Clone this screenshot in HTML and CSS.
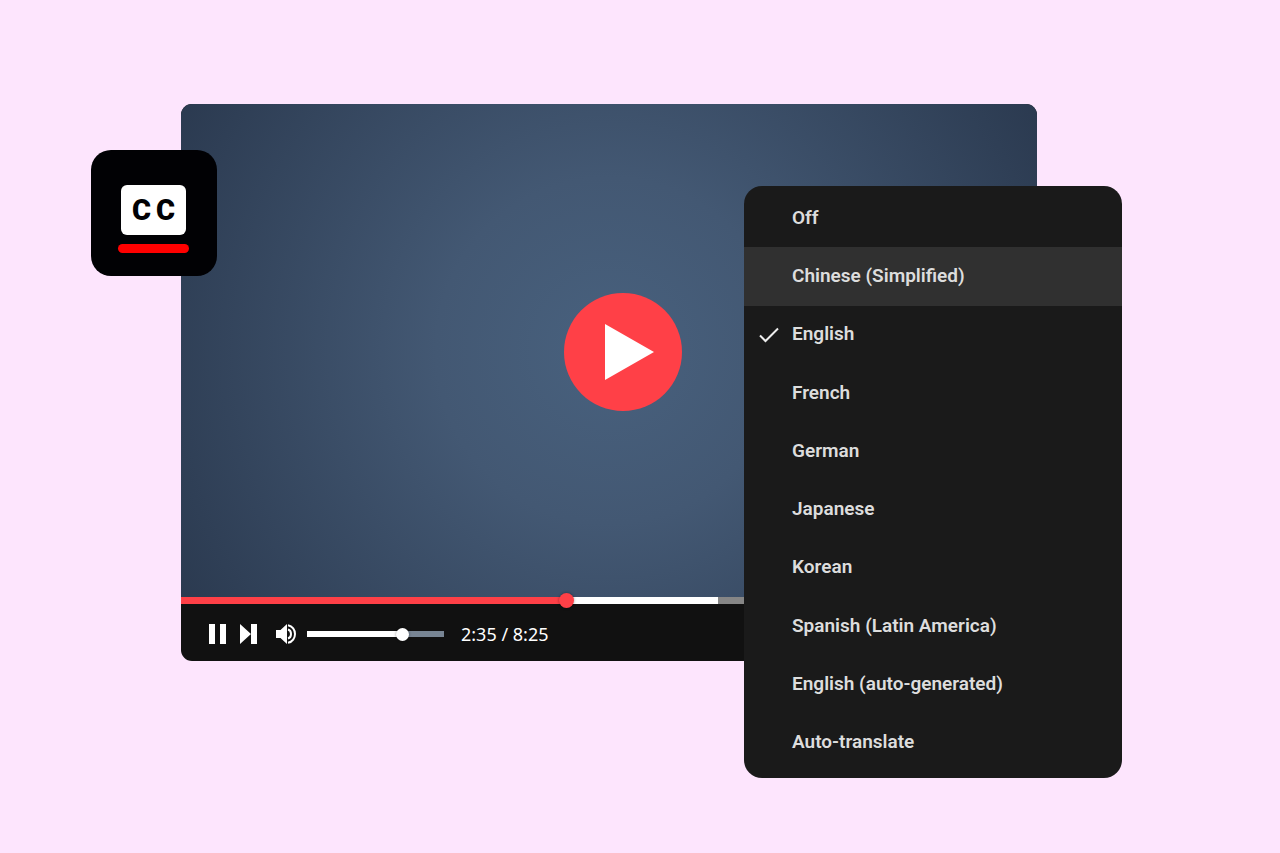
FILE: index.html
```html
<!DOCTYPE html>
<html lang="en">
<head>
    <meta charset="UTF-8">
    <title>Video Player Captions</title>
    <link rel="stylesheet" href="styles.css">
</head>
<body>

    <main class="player">
        <div class="video">
            <button type="button" class="play" aria-label="Play">
                <svg width="118" height="118" viewBox="0 0 118 118">
                    <path d="M41 31 L90 59 L41 87 Z" fill="white"/>
                </svg>
            </button>
        </div>

        <input type="range" class="progress" min="0" max="1000" value="449" aria-label="Seek">

        <div class="controls">
            <button type="button" class="pause" aria-label="Pause">
                <svg width="17" height="20" viewBox="0 0 17 20">
                    <path d="M0 0h6v20H0zM11 0h6v20h-6z" fill="white"/>
                </svg>
            </button>
            <button type="button" class="next" aria-label="Next">
                <svg width="17" height="20" viewBox="0 0 17 20">
                    <path d="M0 0L11 10L0 20zM11 0h6v20h-6z" fill="white"/>
                </svg>
            </button>
            <button type="button" class="mute" aria-label="Mute">
                <svg width="20" height="20" viewBox="0 0 20 20">
                    <path d="M0 6h4.500L11 0v20L4.500 14H0z" fill="white"/>
                    <path d="M12 1.200C16.500 2 19 6 19 10C19 14 16.500 18 12 18.800" fill="none" stroke="white" stroke-width="2"/>
                    <path d="M12 5.500C14 6 15 8 15 10C15 12 14 14 12 14.500" fill="none" stroke="white" stroke-width="2"/>
                </svg>
            </button>
            <input type="range" class="volume" min="0" max="100" value="72" aria-label="Volume">
            <span class="time">2:35 / 8:25</span>
        </div>

        <div class="badge">
            <div class="cc"><span>C</span><span>C</span></div>
            <div class="underline"></div>
        </div>

        <div class="menu" role="menu" aria-label="Subtitles">
            <button type="button" role="menuitemradio" aria-checked="false">Off</button>
            <button type="button" role="menuitemradio" aria-checked="false" class="active">Chinese (Simplified)</button>
            <button type="button" role="menuitemradio" aria-checked="true">
                <svg class="check" width="20" height="16" viewBox="0 0 20 16">
                    <path d="M1 8.500L6.500 14L19 1.500" fill="none" stroke="#eeeeee" stroke-width="2"/>
                </svg>
                English
            </button>
            <button type="button" role="menuitemradio" aria-checked="false">French</button>
            <button type="button" role="menuitemradio" aria-checked="false">German</button>
            <button type="button" role="menuitemradio" aria-checked="false">Japanese</button>
            <button type="button" role="menuitemradio" aria-checked="false">Korean</button>
            <button type="button" role="menuitemradio" aria-checked="false">Spanish (Latin America)</button>
            <button type="button" role="menuitemradio" aria-checked="false">English (auto-generated)</button>
            <button type="button" role="menuitemradio" aria-checked="false">Auto-translate</button>
        </div>
    </main>

</body>
</html>
```
FILE: styles.css
```css
* {
    box-sizing: border-box;
}
body {
    margin: 0;
    padding: 104px 243px 192px 181px;
    background: #fde5fd;
    font-family: Roboto, "Liberation Sans", sans-serif;
}
button {
    border: none;
    padding: 0;
    background: none;
    cursor: pointer;
}
svg {
    display: block;
}
input {
    display: block;
    appearance: none;
    margin: 0;
}

/* player */
.player {
    position: relative;
    background: #111111;
    border-radius: 11px;
}
.video {
    display: flex;
    align-items: center;
    justify-content: center;
    height: 493px;
    padding: 3px 0 0 28px;
    border-radius: 11px 11px 0 0;
    background: radial-gradient(circle, #48617e 0%, #435873 35%, #2b3a50 100%);
}
.play {
    border-radius: 50%;
    background: #ff4047;
}
.progress {
    width: 100%;
    height: 7px;
    background: linear-gradient(to right, #ff4047 45%, white 45%, white 62.7%, #868686 62.7%);
}
.progress::-webkit-slider-thumb {
    appearance: none;
    width: 15px;
    height: 15px;
    border-radius: 50%;
    background: #ff4047;
    box-shadow: 0 0 3px rgba(0, 0, 0, 0.4);
}

/* controls */
.controls {
    display: flex;
    align-items: center;
    height: 57px;
    padding: 3px 28px 0;
}
.next {
    margin-left: 14px;
}
.mute {
    margin-left: 19px;
}
.volume {
    width: 137px;
    height: 6px;
    margin-left: 11px;
    background: linear-gradient(to right, white 70%, #788594 70%);
}
.volume::-webkit-slider-thumb {
    appearance: none;
    width: 13px;
    height: 13px;
    border-radius: 50%;
    background: white;
    box-shadow: 0 0 3px rgba(0, 0, 0, 0.4);
}
.time {
    margin-left: 17px;
    color: white;
    font-family: "Noto Sans", sans-serif;
    font-size: 18px;
}

/* captions badge */
.badge {
    position: absolute;
    top: 46px;
    left: -90px;
    width: 126px;
    height: 126px;
    padding: 35px 1px 0 0;
    border-radius: 20px;
    background: #010104;
}
.cc {
    display: flex;
    align-items: center;
    justify-content: center;
    gap: 5px;
    width: 65px;
    height: 50px;
    margin: 0 auto;
    border-radius: 6px;
    background: white;
    color: #010104;
    font-size: 29px;
    font-weight: 900;
}
.underline {
    width: 71px;
    height: 9px;
    margin: 9px auto 0;
    border-radius: 5px;
    background: #ff0000;
}

/* language menu */
.menu {
    position: absolute;
    top: 82px;
    right: -85px;
    display: flex;
    flex-direction: column;
    width: 378px;
    height: 592px;
    padding: 3px 0 6px;
    border-radius: 18px;
    background: #1a1a1a;
}
.menu button {
    position: relative;
    flex: 1;
    padding: 0 48px 2px;
    color: #dddddd;
    font-family: Roboto, "Liberation Sans", sans-serif;
    font-size: 19px;
    font-weight: 600;
    text-align: left;
}
.menu button.active,
.menu button:hover {
    background: #303030;
}
.check {
    position: absolute;
    top: 21px;
    left: 15px;
}
```
